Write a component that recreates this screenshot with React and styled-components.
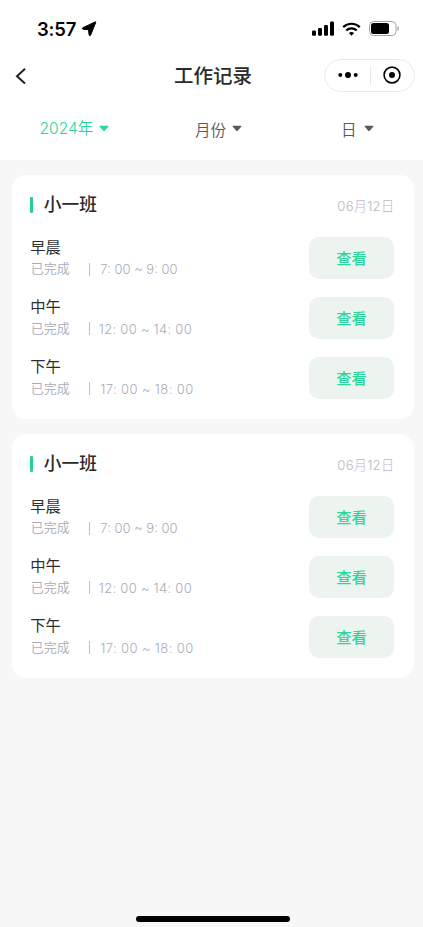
import React from 'react';
import styled, { createGlobalStyle } from 'styled-components';

const GlobalStyle = createGlobalStyle`
  * { box-sizing: border-box; }
  body {
    margin: 0;
    background: #f7f7f7;
    font-family: "Liberation Sans", "Noto Sans CJK SC", sans-serif;
    color: #2a2a2a;
  }
`;

const Screen = styled.div`
  width: 423px;
  height: 927px;
  display: flex;
  flex-direction: column;
  background: #f7f7f7;
  overflow: hidden;
`;

const Header = styled.header`
  height: 160px;
  background: #fff;
  flex: none;
`;

const StatusBar = styled.div`
  height: 57px;
  padding: 0 23px 0 37px;
  display: flex;
  align-items: center;
  justify-content: space-between;
`;

const Clock = styled.div`
  display: flex;
  align-items: center;
  gap: 5px;
  font: 600 18.5px/24px Inter, sans-serif;
  letter-spacing: -0.2px;
  color: #050505;
`;

const StatusIcons = styled.div`
  display: flex;
  align-items: center;
  gap: 8px;
  svg { display: block; }
`;

const NavBar = styled.nav`
  height: 37px;
  padding: 0 8px 0 14px;
  display: grid;
  grid-template-columns: 92px 1fr 91px;
  align-items: center;
  svg { display: block; }
`;

const PageTitle = styled.h1`
  margin: 0;
  padding: 1px 4px 0 0;
  text-align: center;
  font-size: 19.5px;
  line-height: 28px;
  font-weight: 500;
`;

const Capsule = styled.div`
  height: 33px;
  border: 1px solid #ebebeb;
  border-radius: 17px;
  display: flex;
  align-items: center;
`;

const CapsuleButton = styled.button`
  flex: 1;
  height: 19px;
  padding: 0 0 1px 1px;
  border: 0;
  background: none;
  display: flex;
  align-items: center;
  justify-content: center;
  & + & { border-left: 1px solid #e8e8e8; padding-left: 0; }
`;

const Filters = styled.div`
  height: 66px;
  padding: 0 49px 0 39.5px;
  display: grid;
  grid-template-columns: 155.5px 146px 1fr;
  align-items: start;
`;

const Filter = styled.div`
  display: flex;
  align-items: center;
  gap: ${(p) => p.$gap}px;
  margin-top: ${(p) => (p.$active ? 23 : 25)}px;
  line-height: 24px;
  color: ${(p) => (p.$active ? '#2bd69a' : '#5a5a5a')};
  svg { display: block; margin-top: ${(p) => (p.$active ? -2 : -5)}px; }
`;

const FilterLabel = styled.span`
  font-family: ${(p) => (p.$active ? 'Inter' : '"Liberation Sans"')}, "Noto Sans CJK SC", sans-serif;
  font-size: 15.6px;
  font-weight: 350;
`;

const Records = styled.main`
  padding: 14.6px 8.7px 0 11.8px;
  flex: 1;
  display: flex;
  flex-direction: column;
  gap: 14.4px;
`;

const Card = styled.section`
  height: 244.7px;
  padding: 16px 20px 0 18.5px;
  border-radius: 14px;
  background: #fff;
`;

const CardHeader = styled.div`
  height: 28px;
  display: flex;
  align-items: center;
`;

const Accent = styled.i`
  width: 3px;
  height: 16px;
  border-radius: 1px;
  background: #23d292;
`;

const ClassName = styled.h2`
  margin: 1.5px 0 0 10.5px;
  flex: 1;
  font-size: 17.7px;
  line-height: 28px;
  font-weight: 500;
`;

const CardDate = styled.time`
  font-family: Inter, "Noto Sans CJK SC", sans-serif;
  font-weight: 300;
  font-size: 13.2px;
  letter-spacing: 0.2px;
  line-height: 20px;
  margin-top: 3px;
  color: #b9bac4;
`;

const Rows = styled.div`
  margin-top: 18.5px;
  display: flex;
  flex-direction: column;
  gap: 17.8px;
`;

const Row = styled.div`
  height: 42px;
  display: flex;
  align-items: center;
  justify-content: space-between;
`;

const Period = styled.div`
  font-size: 15.3px;
  line-height: 22px;
  color: #2e2e2e;
`;

const Meta = styled.div`
  display: flex;
  align-items: center;
  height: 21px;
  font-size: 13px;
  line-height: 20px;
  color: #a9acb8;
`;

const Status = styled.span`
  width: 58.5px;
  margin-left: .5px;
  font-weight: 350;
`;

const Divider = styled.i`
  width: 1px;
  height: 13px;
  background: #c0c2ca;
`;

const Hours = styled.span`
  margin-left: ${(p) => p.$indent}px;
  font-family: Inter, sans-serif;
  font-weight: 300;
  font-size: 13px;
  letter-spacing: ${(p) => p.$tracking}px;
  white-space: nowrap;
`;

const ViewButton = styled.button`
  width: 85.5px;
  height: 42px;
  padding: 0 0 2px;
  border: 0;
  border-radius: 10px;
  background: #edf4f0;
  color: #2cd69a;
  font: 500 15.3px/24px "Noto Sans CJK SC", sans-serif;
`;

const HomeArea = styled.footer`
  height: 11px;
  display: flex;
  justify-content: center;
  padding-left: 3px;
`;

const HomeIndicator = styled.div`
  width: 154px;
  height: 6px;
  border-radius: 3px;
  background: #000;
`;

const Caret = () => (
  <svg width="10" height="7" viewBox="0 0 10 7">
    <path d="M1.2.8h7.6c.6 0 .8.5.4.9L5.7 5.8c-.4.5-1 .5-1.4 0L.8 1.7C.4 1.3.6.8 1.2.8Z" fill="currentColor" />
  </svg>
);

const periods = [
  { name: '早晨', hours: '7: 00 ~ 9: 00', indent: 10, tracking: 0 },
  { name: '中午', hours: '12: 00 ~ 14: 00', indent: 8.5, tracking: 0.28 },
  { name: '下午', hours: '17: 00 ~ 18: 00', indent: 10, tracking: 0.38 },
];

const records = [
  { id: 1, className: '小一班', date: '06月12日' },
  { id: 2, className: '小一班', date: '06月12日' },
];

function RecordCard({ className, date }) {
  return (
    <Card>
      <CardHeader>
        <Accent />
        <ClassName>{className}</ClassName>
        <CardDate>{date}</CardDate>
      </CardHeader>
      <Rows>
        {periods.map((p) => (
          <Row key={p.name}>
            <div>
              <Period>{p.name}</Period>
              <Meta>
                <Status>已完成</Status>
                <Divider />
                <Hours $indent={p.indent} $tracking={p.tracking}>{p.hours}</Hours>
              </Meta>
            </div>
            <ViewButton>查看</ViewButton>
          </Row>
        ))}
      </Rows>
    </Card>
  );
}

export default function App() {
  return (
    <Screen>
      <GlobalStyle />
      <Header>
        <StatusBar>
          <Clock>
            3:57
            <svg width="16" height="16" viewBox="0 0 16 16">
              <path d="M14.8 1.2 9.6 14.2c-.3.8-1.4.6-1.5-.2L7.5 8.7 2.2 8.2C1.1 8 1 7 1.9 6.7L14 1c.6-.3 1 0 .8.2Z" fill="#000" stroke="#000" strokeLinejoin="round" />
            </svg>
          </Clock>
          <StatusIcons>
            <svg width="22" height="15" viewBox="0 0 22 15">
              <rect x="0" y="9.5" width="4" height="5.2" rx="1.2" />
              <rect x="6" y="7" width="4" height="7.7" rx="1.2" />
              <rect x="12" y="4" width="4" height="10.7" rx="1.2" />
              <rect x="18" y="0.5" width="4" height="14.2" rx="1.2" />
            </svg>
            <svg width="19" height="14" viewBox="0 0 19 14">
              <path d="M1.2 5.1c4.7-4.5 11.9-4.5 16.6 0M4.3 8.4c3-2.8 7.4-2.8 10.4 0" fill="none" stroke="#000" strokeWidth="2.2" />
              <path d="M6.9 10.9c1.5-1.3 3.7-1.3 5.2 0L9.5 13.7Z" />
            </svg>
            <svg width="31" height="15" viewBox="0 0 31 15">
              <rect x=".5" y=".5" width="26.5" height="14" rx="4" fill="none" stroke="#a5a5a5" />
              <rect x="2" y="2" width="18" height="11" rx="2.5" />
              <path d="M28.5 5c2 .7 2 4.3 0 5Z" fill="#a5a5a5" />
            </svg>
          </StatusIcons>
        </StatusBar>
        <NavBar>
          <svg width="14" height="18" viewBox="0 0 14 18">
            <path d="M11 1.7 3 9.2l8 7.4" fill="none" stroke="#222" strokeWidth="2" />
          </svg>
          <PageTitle>工作记录</PageTitle>
          <Capsule>
            <CapsuleButton aria-label="更多">
              <svg width="20" height="8" viewBox="0 0 20 8">
                <circle cx="2.3" cy="4" r="2" />
                <circle cx="10" cy="4" r="3" />
                <circle cx="17.7" cy="4" r="2" />
              </svg>
            </CapsuleButton>
            <CapsuleButton aria-label="关闭">
              <svg width="18" height="18" viewBox="0 0 18 18">
                <circle cx="9" cy="9" r="7.9" fill="none" stroke="#000" strokeWidth="1.6" />
                <circle cx="9" cy="9" r="3" />
              </svg>
            </CapsuleButton>
          </Capsule>
        </NavBar>
        <Filters>
          <Filter $active $gap={6}><FilterLabel $active>2024年</FilterLabel><Caret /></Filter>
          <Filter $gap={6}><FilterLabel>月份</FilterLabel><Caret /></Filter>
          <Filter $gap={7}><FilterLabel>日</FilterLabel><Caret /></Filter>
        </Filters>
      </Header>
      <Records>
        {records.map((r) => <RecordCard key={r.id} className={r.className} date={r.date} />)}
      </Records>
      <HomeArea><HomeIndicator /></HomeArea>
    </Screen>
  );
}
